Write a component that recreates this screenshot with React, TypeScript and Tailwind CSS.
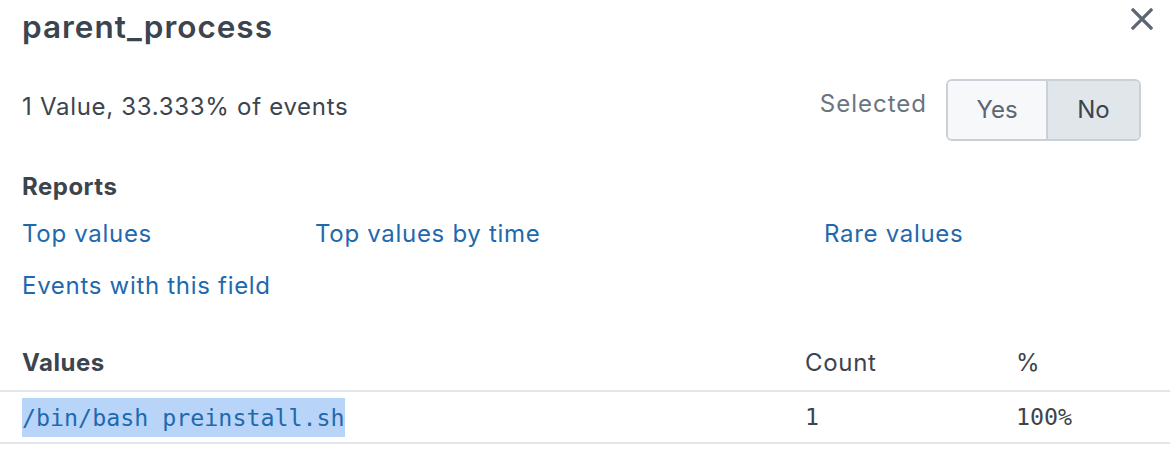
import React from 'react';

const sans = { fontFamily: 'Inter, "Open Sans", sans-serif' };

const App = () => {
  return (
    <div className="w-[1170px] h-[458px] bg-white text-[#3c444d] overflow-hidden tracking-[0.7px]" style={sans}>
      {/* header */}
      <div className="flex items-start justify-between pl-[22px] pr-[17px] h-[60px]">
        <h1 className="text-[31.5px] font-semibold leading-[30px] mt-[12px] tracking-[1px]">parent_process</h1>
        <button className="mt-[8px] text-[#5c6773]" aria-label="close">
          <svg width="22" height="22" viewBox="0 0 22 22">
            <path d="M2 2 L20 20 M20 2 L2 20" stroke="currentColor" strokeWidth="3.2" strokeLinecap="square" />
          </svg>
        </button>
      </div>

      {/* summary + selected */}
      <div className="flex items-center justify-between pl-[22px] pr-[29px] h-[62px] mt-[19px]">
        <div className="text-[24px] leading-none mb-[6px]">1 Value, 33.333% of events</div>
        <div className="flex items-center gap-[19px]">
          <span className="text-[24px] text-[#6b7580] leading-none mb-[12px] tracking-[1px]">Selected</span>
          <div className="flex h-[62px] w-[195px] rounded-[6px] border-2 border-[#c9d0d8] overflow-hidden text-[24px] tracking-normal">
            <button className="w-[100px] bg-[#f7f8fa] border-r-2 border-[#c9d0d8] text-[#5c6773]">Yes</button>
            <button className="flex-1 bg-[#e1e6eb] text-[#3c444d]">No</button>
          </div>
        </div>
      </div>

      {/* reports */}
      <div className="pl-[22px] mt-[34px]">
        <h2 className="text-[24px] font-bold leading-none tracking-[0.5px]">Reports</h2>
        <div className="grid grid-cols-[293px_509px_1fr] text-[24px] text-[#1f69ad] leading-none mt-[23px] gap-y-[28px]">
          <a href="#">Top values</a>
          <a href="#">Top values by time</a>
          <a href="#">Rare values</a>
          <a href="#">Events with this field</a>
        </div>
      </div>

      {/* values table */}
      <div className="mt-[53px]">
        <div className="grid grid-cols-[783px_211px_1fr] items-end pl-[22px] text-[24px] leading-none">
          <span className="font-bold tracking-[0.5px]">Values</span>
          <span>Count</span>
          <span>%</span>
        </div>
        <div className="border-t-2 border-[#e1e6eb] mt-[15px]" />
        <div className="grid grid-cols-[783px_211px_1fr] items-center pl-[22px] h-[50px] text-[23.3px] tracking-normal" style={{ fontFamily: '"DejaVu Sans Mono", "Liberation Mono", monospace' }}>
          <span>
            <span className="inline-block h-[39px] leading-[39px] bg-[#b8d5f9] text-[#1f69ad]">/bin/bash preinstall.sh</span>
          </span>
          <span>1</span>
          <span>100%</span>
        </div>
        <div className="border-t-2 border-[#e1e6eb]" />
      </div>
    </div>
  );
};

export default App;
